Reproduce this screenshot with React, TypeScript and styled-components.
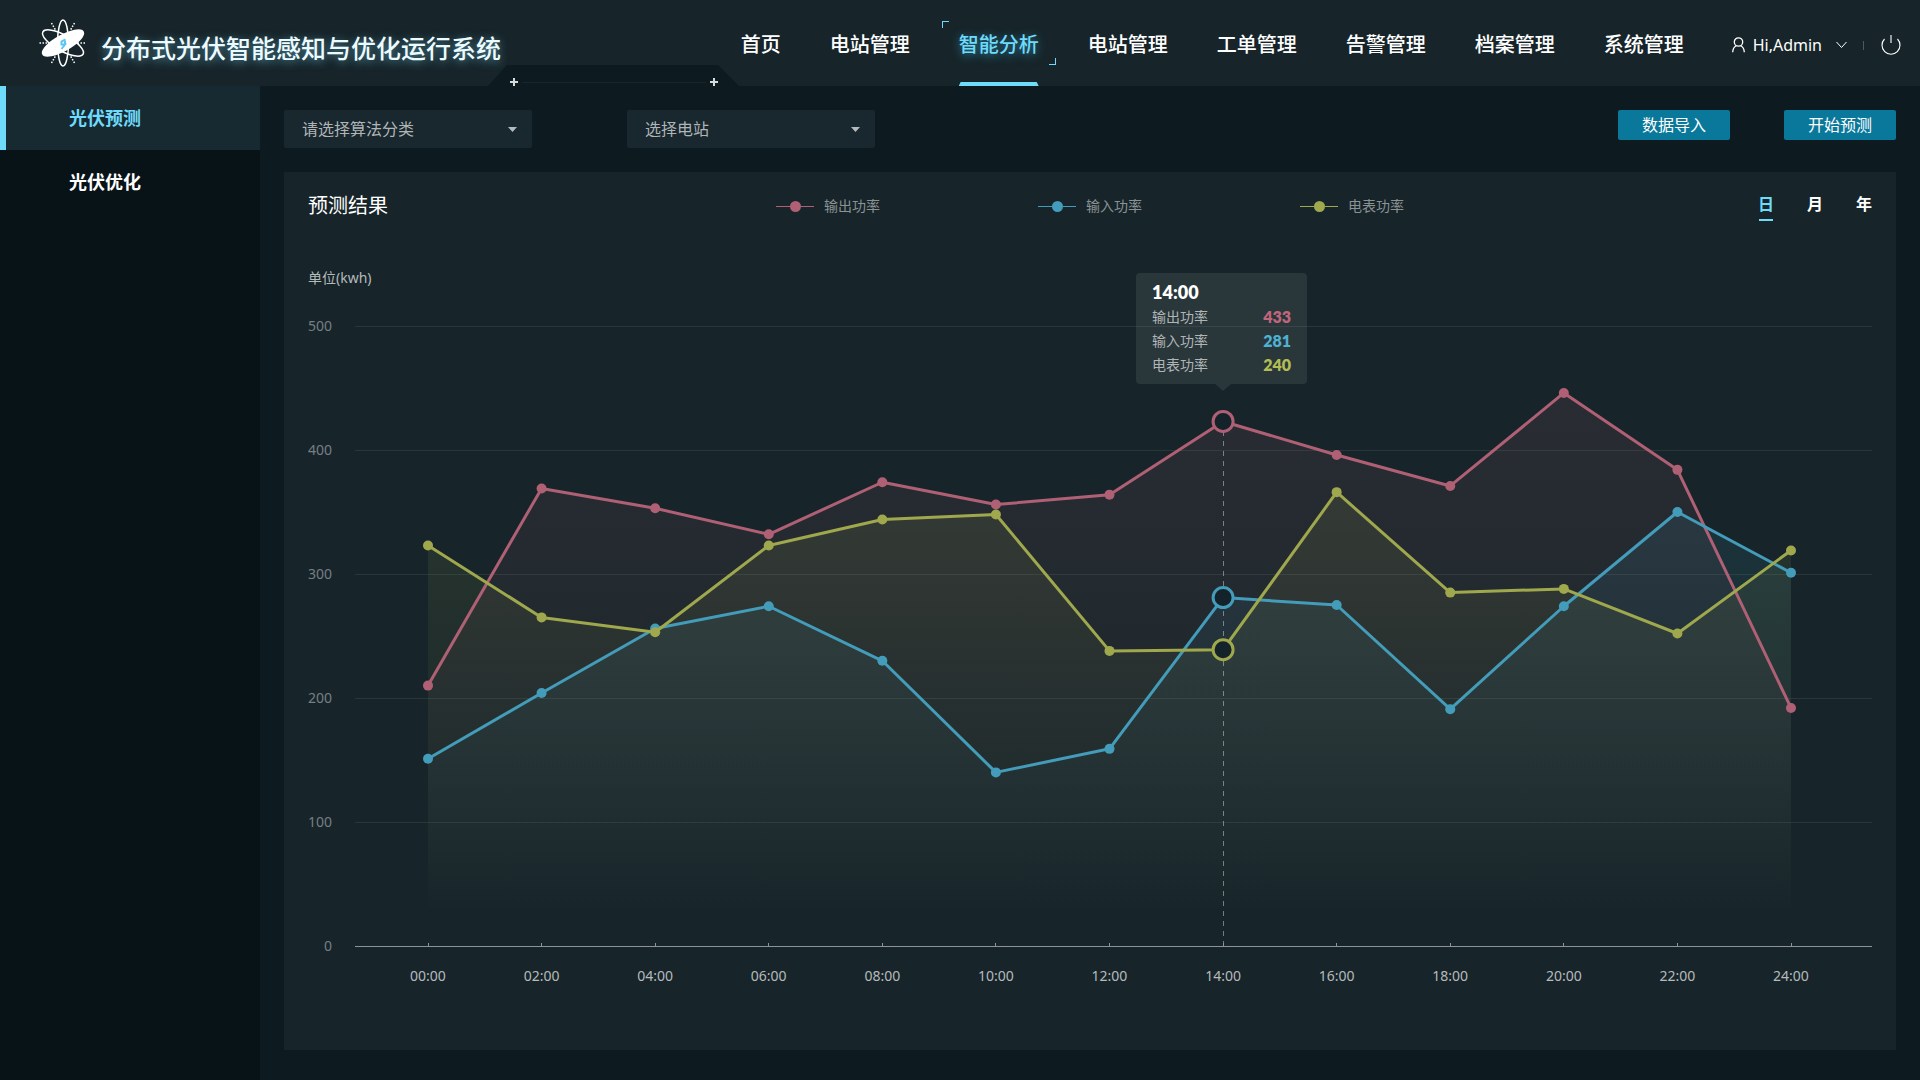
import React from "react";
import styled, { createGlobalStyle, css } from "styled-components";

const color = {
  bar: "#17252a",
  page: "#0d1b20",
  side: "#081317",
  field: "#18282e",
  accent: "#6fdbfb",
  button: "#0a789a",
  red: "#b06074",
  blue: "#439cb9",
  green: "#9fa84c",
};

const sans = `"Noto Sans", "Noto Sans CJK SC", sans-serif`;

const GlobalStyle = createGlobalStyle`
  * { box-sizing: border-box; }
  body { margin: 0; background: ${color.page}; color: #fff; font-family: ${sans}; }
  button, select { font-family: inherit; }
  a { color: inherit; text-decoration: none; }
`;

const Page = styled.div`
  display: flex;
  flex-direction: column;
  min-height: 100vh;
`;

/* ---------- header ---------- */

const Header = styled.header`
  position: relative;
  display: flex;
  align-items: center;
  height: 86px;
  padding: 0 19px 0 39px;
  background: ${color.bar};
`;

const Brand = styled.div`
  display: flex;
  align-items: center;
  gap: 14px;
`;

const BrandTitle = styled.h1`
  margin: 0;
  padding-top: 10px;
  font-size: 25px;
  line-height: 32px;
  font-weight: 500;
  font-style: oblique 6deg;
  white-space: nowrap;
  color: #ecfbff;
  text-shadow: 0 2px 8px rgba(120, 210, 240, 0.6);
`;

const Notch = styled.svg`
  position: absolute;
  left: 488px;
  bottom: 0;
`;

const Nav = styled.nav`
  display: flex;
  align-self: stretch;
  gap: 49px;
  margin-left: auto;
`;

const NavLink = styled.a<{ $active?: boolean }>`
  position: relative;
  display: flex;
  align-items: center;
  padding-top: 4px;
  font-size: 20px;
  line-height: 28px;
  font-weight: 500;
  white-space: nowrap;
  ${(p) =>
    p.$active &&
    css`
      color: ${color.accent};
      text-shadow: 0 2px 10px rgba(60, 190, 235, 0.6);
      &::after {
        content: "";
        position: absolute;
        left: 0;
        right: 0;
        bottom: 0;
        height: 4px;
        background: ${color.accent};
        clip-path: polygon(2px 0, calc(100% - 2px) 0, 100% 100%, 0 100%);
      }
    `}
`;

const Corner = styled.span<{ $end?: boolean }>`
  position: absolute;
  width: 7px;
  height: 7px;
  ${(p) =>
    p.$end
      ? css`
          right: -17px;
          bottom: 21px;
          border-right: 1px solid ${color.accent};
          border-bottom: 1px solid ${color.accent};
        `
      : css`
          left: -17px;
          top: 21px;
          border-left: 1px solid ${color.accent};
          border-top: 1px solid ${color.accent};
        `}
`;

const Account = styled.div`
  display: flex;
  align-items: center;
  margin-left: 48px;
  padding-top: 4px;
`;

const UserButton = styled.button`
  display: flex;
  align-items: center;
  gap: 8px;
  padding: 0;
  border: 0;
  background: none;
  color: #fff;
  font-size: 16px;
  line-height: 24px;
`;

const UserName = styled.span`
  margin-right: 6px;
`;

const Divider = styled.span`
  width: 1px;
  height: 9px;
  margin: 0 17px 0 16px;
  background: #4d595d;
`;

const IconButton = styled.button`
  display: flex;
  padding: 0;
  border: 0;
  background: none;
  color: #fff;
`;

/* ---------- body ---------- */

const Body = styled.div`
  display: flex;
  flex: 1;
`;

const Sidebar = styled.aside`
  flex: none;
  width: 260px;
  background: ${color.side};
`;

const SideLink = styled.a<{ $active?: boolean }>`
  display: flex;
  align-items: center;
  height: 64px;
  padding-left: 63px;
  border-left: 6px solid ${(p) => (p.$active ? color.accent : "transparent")};
  background: ${(p) => (p.$active ? "#172a31" : "transparent")};
  color: ${(p) => (p.$active ? color.accent : "#fff")};
  font-size: 18px;
  line-height: 24px;
  font-weight: 700;
`;

const Main = styled.main`
  display: flex;
  flex-direction: column;
  flex: 1;
  min-width: 0;
  gap: 24px;
  padding: 24px 24px 30px;
`;

const Toolbar = styled.div`
  display: flex;
  justify-content: space-between;
  align-items: flex-start;
`;

const Filters = styled.div`
  display: flex;
  gap: 95px;
`;

const SelectBox = styled.div`
  position: relative;
`;

const Select = styled.select`
  display: block;
  width: 248px;
  height: 38px;
  padding: 0 40px 0 18px;
  appearance: none;
  border: 0;
  border-radius: 2px;
  background: ${color.field};
  color: #b0b5b7;
  font-size: 16px;
`;

const Caret = styled.svg`
  position: absolute;
  right: 15px;
  top: 17px;
  pointer-events: none;
`;

const Actions = styled.div`
  display: flex;
  gap: 54px;
`;

const ActionButton = styled.button`
  width: 112px;
  height: 30px;
  padding: 0;
  border: 0;
  border-radius: 2px;
  background: ${color.button};
  color: #fff;
  font-size: 16px;
  line-height: 24px;
`;

const Panel = styled.section`
  flex: 1;
  padding: 16px 24px 24px;
  background: ${color.bar};
`;

const PanelHead = styled.div`
  display: grid;
  grid-template-columns: 1fr auto 1fr;
  align-items: center;
  height: 34px;
`;

const PanelTitle = styled.h2`
  margin: 0;
  padding-top: 2px;
  font-size: 20px;
  line-height: 28px;
  font-weight: 400;
`;

const Legend = styled.ul`
  display: flex;
  gap: 158px;
  margin: 0;
  padding: 2px 0 0;
  list-style: none;
`;

const LegendItem = styled.li`
  display: flex;
  align-items: center;
  gap: 10px;
  color: #8b9294;
  font-size: 14px;
  line-height: 20px;
`;

const Tabs = styled.div`
  display: flex;
  justify-content: flex-end;
  gap: 33px;
  padding-bottom: 2px;
`;

const Tab = styled.button<{ $active?: boolean }>`
  position: relative;
  padding: 0;
  border: 0;
  background: none;
  color: ${(p) => (p.$active ? color.accent : "#fff")};
  font-size: 16px;
  line-height: 30px;
  font-weight: 700;
  ${(p) =>
    p.$active &&
    css`
      &::after {
        content: "";
        position: absolute;
        left: 1px;
        right: 1px;
        bottom: -2px;
        height: 2px;
        background: ${color.accent};
      }
    `}
`;

const ChartArea = styled.div`
  position: relative;
  margin-top: 34px;
`;

const ChartSvg = styled.svg`
  display: block;
  width: 100%;
  height: auto;
  font-family: ${sans};
  font-size: 14px;
`;

const Tooltip = styled.div`
  position: absolute;
  width: 171px;
  height: 111px;
  padding: 6px 16px 0;
  border-radius: 4px;
  background: rgba(255, 255, 255, 0.08);
  transform: translateX(-87px);
  &::after {
    content: "";
    position: absolute;
    left: 79px;
    top: 100%;
    width: 16px;
    height: 7px;
    background: rgba(255, 255, 255, 0.08);
    clip-path: polygon(0 0, 100% 0, 50% 100%);
  }
`;

const TooltipTime = styled.div`
  font-family: Lato, sans-serif;
  font-size: 18px;
  line-height: 26px;
  font-weight: 800;
`;

const TooltipRow = styled.div<{ $tone: string }>`
  display: flex;
  justify-content: space-between;
  font-size: 14px;
  line-height: 24px;
  color: #b0b5b7;
  strong {
    font-family: Lato, sans-serif;
    font-size: 16px;
    font-weight: 800;
    color: ${(p) => p.$tone};
  }
`;

/* ---------- data ---------- */

const navItems = ["首页", "电站管理", "智能分析", "电站管理", "工单管理", "告警管理", "档案管理", "系统管理"];
const hours = ["00:00", "02:00", "04:00", "06:00", "08:00", "10:00", "12:00", "14:00", "16:00", "18:00", "20:00", "22:00", "24:00"];
const series = [
  { id: "out", name: "输出功率", stroke: color.red, tone: "#c0667c", reading: 433,
    values: [210, 369, 353, 332, 374, 356, 364, 423, 396, 371, 446, 384, 192] },
  { id: "in", name: "输入功率", stroke: color.blue, tone: "#4fb0d0", reading: 281,
    values: [151, 204, 256, 274, 230, 140, 159, 281, 275, 191, 274, 350, 301] },
  { id: "meter", name: "电表功率", stroke: color.green, tone: "#b2bd54", reading: 240,
    values: [323, 265, 253, 323, 344, 348, 238, 239, 366, 285, 288, 252, 319] },
];
const focus = 7;

/* ---------- chart ---------- */

const chart = { w: 1564, h: 744, left: 47, first: 120, last: 1483, top: 70, base: 690 };
const px = (i: number) => chart.first + (i * (chart.last - chart.first)) / (hours.length - 1);
const py = (v: number) => chart.base - (v * (chart.base - chart.top)) / 500;

function Chart() {
  return (
    <ChartArea>
      <ChartSvg viewBox={`0 0 ${chart.w} ${chart.h}`} role="img" aria-label="预测结果">
        <defs>
          {series.map((s) => (
            <linearGradient key={s.id} id={`fill-${s.id}`} gradientUnits="userSpaceOnUse"
              x1="0" x2="0" y1={py(Math.max(...s.values))} y2={chart.base - 30}>
              <stop offset="0" stopColor={s.stroke} stopOpacity="0.12" />
              <stop offset="1" stopColor={s.stroke} stopOpacity="0" />
            </linearGradient>
          ))}
        </defs>
        <text x="0" y="27" fill="#b5babc">单位(kwh)</text>
        {[0, 100, 200, 300, 400, 500].map((v) => (
          <g key={v}>
            <text x="24" y={py(v) + 5} textAnchor="end" fill="#767f83">{v}</text>
            {v > 0 && (
              <line x1={chart.left} x2={chart.w} y1={py(v)} y2={py(v)}
                stroke="#fff" strokeOpacity="0.08" shapeRendering="crispEdges" />
            )}
          </g>
        ))}
        {series.map((s) => (
          <polygon key={s.id} fill={`url(#fill-${s.id})`}
            points={[
              `${px(0)},${chart.base}`,
              ...s.values.map((v, i) => `${px(i)},${py(v)}`),
              `${px(hours.length - 1)},${chart.base}`,
            ].join(" ")} />
        ))}
        <line x1={chart.left} x2={chart.w} y1={chart.base} y2={chart.base}
          stroke="#8d9497" shapeRendering="crispEdges" />
        <line x1={px(focus)} x2={px(focus)} y1={py(series[0].values[focus])} y2={chart.base}
          stroke="#fff" strokeOpacity="0.4" strokeDasharray="5 5" shapeRendering="crispEdges" />
        {hours.map((h, i) => (
          <g key={h}>
            <line x1={px(i)} x2={px(i)} y1={chart.base - 3} y2={chart.base}
              stroke="#8d9497" shapeRendering="crispEdges" />
            <text x={px(i)} y={chart.base + 35} textAnchor="middle" fill="#b5babc">{h}</text>
          </g>
        ))}
        {series.map((s) => (
          <g key={s.id}>
            <polyline fill="none" stroke={s.stroke} strokeWidth="3" strokeLinejoin="round"
              points={s.values.map((v, i) => `${px(i)},${py(v)}`).join(" ")} />
            {s.values.map((v, i) =>
              i === focus ? null : <circle key={i} cx={px(i)} cy={py(v)} r="5" fill={s.stroke} />
            )}
          </g>
        ))}
        {series.map((s) => (
          <circle key={s.id} cx={px(focus)} cy={py(s.values[focus])} r="10"
            fill="#14232a" stroke={s.stroke} strokeWidth="3" />
        ))}
      </ChartSvg>
      <Tooltip style={{ left: `${(px(focus) / chart.w) * 100}%`, top: `${(17 / chart.h) * 100}%` }}>
        <TooltipTime>{hours[focus]}</TooltipTime>
        {series.map((s) => (
          <TooltipRow key={s.id} $tone={s.tone}>
            <span>{s.name}</span>
            <strong>{s.reading}</strong>
          </TooltipRow>
        ))}
      </Tooltip>
    </ChartArea>
  );
}

/* ---------- drawings ---------- */

function Logo() {
  return (
    <svg width="48" height="50" viewBox="-24 -25 48 50" fill="none" stroke="#fff" aria-hidden="true">
      <ellipse rx="5.5" ry="23" strokeWidth="1.5" />
      <ellipse rx="23" ry="8" strokeWidth="1.5" transform="rotate(29)" />
      <ellipse rx="23" ry="7.5" strokeWidth="1.5" transform="rotate(-29)" fill="#fff" />
      <g strokeWidth="1.5" strokeDasharray="1.5 1.5">
        <path d="M-23.500 0h9M14.500 0h9M-11.500-20l4 7M11.500-20l-4 7M-11.500 20l4-7M11.500 20l-4-7" />
      </g>
      <path d="M2.500-3.500L-1.500-1.500V1.500H2L-1.500 6M2-2v3" stroke="#5cc8f2" strokeWidth="2" />
    </svg>
  );
}

function HeaderNotch() {
  return (
    <Notch width="251" height="21" viewBox="0 0 251 21" aria-hidden="true">
      <path d="M0 21L19 0H230L251 21z" fill={color.page} />
      <path d="M34 17.500H218" stroke="#17262b" />
      <path d="M22 17h8M26 13v8M222 17h8M226 13v8" stroke="#d5dbdc" strokeWidth="2" />
    </Notch>
  );
}

function FilterSelect({ label }: { label: string }) {
  return (
    <SelectBox>
      <Select aria-label={label} defaultValue="">
        <option value="">{label}</option>
      </Select>
      <Caret width="9" height="5" viewBox="0 0 9 5" aria-hidden="true">
        <path d="M0 0h9L4.500 5z" fill="#b5babc" />
      </Caret>
    </SelectBox>
  );
}

export default function App() {
  return (
    <Page>
      <GlobalStyle />
      <Header>
        <HeaderNotch />
        <Brand>
          <Logo />
          <BrandTitle>分布式光伏智能感知与优化运行系统</BrandTitle>
        </Brand>
        <Nav>
          {navItems.map((item, i) => (
            <NavLink key={i} href="#" $active={i === 2}>
              {i === 2 && <Corner />}
              {item}
              {i === 2 && <Corner $end />}
            </NavLink>
          ))}
        </Nav>
        <Account>
          <UserButton type="button">
            <svg width="13" height="16" viewBox="0 0 13 16" fill="none" stroke="currentColor" strokeWidth="1.3" aria-hidden="true">
              <circle cx="6.5" cy="5" r="4.2" />
              <path d="M4.200 8.800C2 10 .8 12 .7 15.200M8.800 8.800c2.200 1.200 3.400 3.200 3.500 6.400" />
            </svg>
            <UserName>Hi,Admin</UserName>
            <svg width="11" height="8" viewBox="0 0 11 8" fill="none" stroke="currentColor" strokeWidth="1" aria-hidden="true">
              <path d="M.5 1L5.500 6.500 10.500 1" />
            </svg>
          </UserButton>
          <Divider />
          <IconButton type="button" aria-label="退出">
            <svg width="20" height="20" viewBox="0 0 20 20" fill="none" stroke="currentColor" strokeWidth="1.100" aria-hidden="true">
              <path d="M10 0v8M3.500 4A9 9 0 1 0 16.500 4" />
            </svg>
          </IconButton>
        </Account>
      </Header>
      <Body>
        <Sidebar>
          <SideLink href="#" $active>光伏预测</SideLink>
          <SideLink href="#">光伏优化</SideLink>
        </Sidebar>
        <Main>
          <Toolbar>
            <Filters>
              <FilterSelect label="请选择算法分类" />
              <FilterSelect label="选择电站" />
            </Filters>
            <Actions>
              <ActionButton type="button">数据导入</ActionButton>
              <ActionButton type="button">开始预测</ActionButton>
            </Actions>
          </Toolbar>
          <Panel>
            <PanelHead>
              <PanelTitle>预测结果</PanelTitle>
              <Legend>
                {series.map((s) => (
                  <LegendItem key={s.id}>
                    <svg width="38" height="12" viewBox="0 0 38 12" aria-hidden="true">
                      <path d="M0 6.500H38" stroke={s.stroke} />
                      <circle cx="19.500" cy="6.500" r="5.500" fill={s.stroke} />
                    </svg>
                    {s.name}
                  </LegendItem>
                ))}
              </Legend>
              <Tabs>
                <Tab type="button" $active>日</Tab>
                <Tab type="button">月</Tab>
                <Tab type="button">年</Tab>
              </Tabs>
            </PanelHead>
            <Chart />
          </Panel>
        </Main>
      </Body>
    </Page>
  );
}
